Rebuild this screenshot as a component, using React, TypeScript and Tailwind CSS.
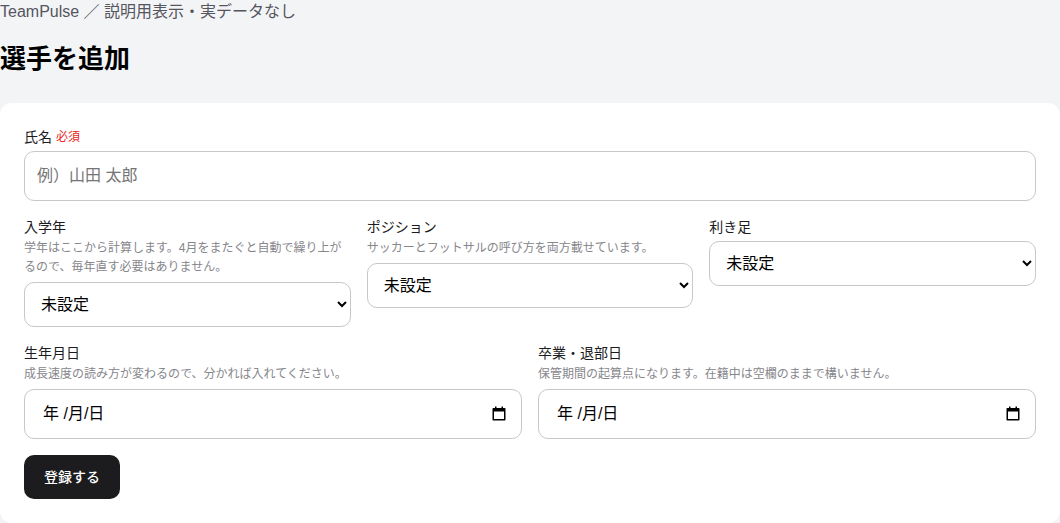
import React from 'react';

const controlClass =
  'w-full rounded-[10px] border border-[#c7c7cc] bg-white text-base text-black';

interface FieldProps {
  id: string;
  label: string;
  required?: boolean;
  hint?: string;
  children: React.ReactNode;
}

const Field: React.FC<FieldProps> = ({ id, label, required, hint, children }) => (
  <div className="min-w-0">
    <label htmlFor={id} className="flex h-5 items-center gap-1 text-sm leading-5 text-[#1c1c1e]">
      {label}
      {required && <span className="text-xs leading-5 text-[#e8261c]">必須</span>}
    </label>
    {hint && (
      <p id={`${id}-hint`} className="mt-0.5 text-xs leading-[19px] text-[#86868b]">
        {hint}
      </p>
    )}
    <div className={hint ? 'mt-[5px]' : 'mt-1'}>{children}</div>
  </div>
);

const SelectInput: React.FC<{ id: string; options: string[] }> = ({ id, options }) => (
  <select id={id} className={`${controlClass} block h-[45px] px-3`}>
    <option value="">未設定</option>
    {options.map((option) => (
      <option key={option} value={option}>
        {option}
      </option>
    ))}
  </select>
);

const DateInput: React.FC<{ id: string }> = ({ id }) => (
  <div className={`${controlClass} flex h-[50px] items-center pl-[18px] pr-3`}>
    <input
      id={id}
      type="text"
      placeholder="年 /月/日"
      aria-describedby={`${id}-hint`}
      className="h-full min-w-0 flex-1 bg-transparent outline-none placeholder:text-black"
    />
    <button type="button" aria-label="カレンダーを開く" className="flex size-5 items-center justify-center">
      <svg viewBox="0 0 16 16" className="size-4" fill="currentColor" aria-hidden="true">
        <path d="M4 0.5h1.5V2h5V0.5H12V2h1.5c.6 0 1 .4 1 1v10.5c0 .6-.4 1-1 1h-11c-.6 0-1-.4-1-1V3c0-.6.4-1 1-1H4zM3 5.5V13h10V5.5z" fillRule="evenodd" />
      </svg>
    </button>
  </div>
);

const App: React.FC = () => {
  return (
    <div
      lang="ja"
      className="min-h-screen bg-[#f3f4f6] font-['Liberation_Sans','Noto_Sans_CJK_JP',sans-serif]"
    >
      <header className="mb-6">
        <p className="text-base leading-6 text-[#55555f]">TeamPulse ／ 説明用表示・実データなし</p>
        <h1 className="mt-4 text-[26px] font-bold leading-[39px] text-black">選手を追加</h1>
      </header>

      <form
        className="flex flex-col gap-4 rounded-xl bg-white p-6"
        onSubmit={(e) => e.preventDefault()}
      >
        <Field id="name" label="氏名" required>
          <input
            id="name"
            type="text"
            required
            placeholder="例）山田 太郎"
            className={`${controlClass} block h-[50px] px-3 placeholder:text-[#757575]`}
          />
        </Field>

        <div className="grid grid-cols-3 gap-4">
          <Field
            id="entry-year"
            label="入学年"
            hint="学年はここから計算します。4月をまたぐと自動で繰り上がるので、毎年直す必要はありません。"
          >
            <SelectInput id="entry-year" options={['2023年', '2024年', '2025年']} />
          </Field>
          <Field
            id="position"
            label="ポジション"
            hint="サッカーとフットサルの呼び方を両方載せています。"
          >
            <SelectInput id="position" options={['GK', 'DF', 'MF', 'FW']} />
          </Field>
          <Field id="foot" label="利き足">
            <SelectInput id="foot" options={['右', '左', '両足']} />
          </Field>
        </div>

        <div className="grid grid-cols-2 gap-4">
          <Field
            id="birthday"
            label="生年月日"
            hint="成長速度の読み方が変わるので、分かれば入れてください。"
          >
            <DateInput id="birthday" />
          </Field>
          <Field
            id="leave-date"
            label="卒業・退部日"
            hint="保管期間の起算点になります。在籍中は空欄のままで構いません。"
          >
            <DateInput id="leave-date" />
          </Field>
        </div>

        <button
          type="submit"
          className="h-11 self-start rounded-[10px] bg-[#1c1c1e] px-5 text-sm font-medium text-white"
        >
          登録する
        </button>
      </form>
    </div>
  );
};

export default App;
